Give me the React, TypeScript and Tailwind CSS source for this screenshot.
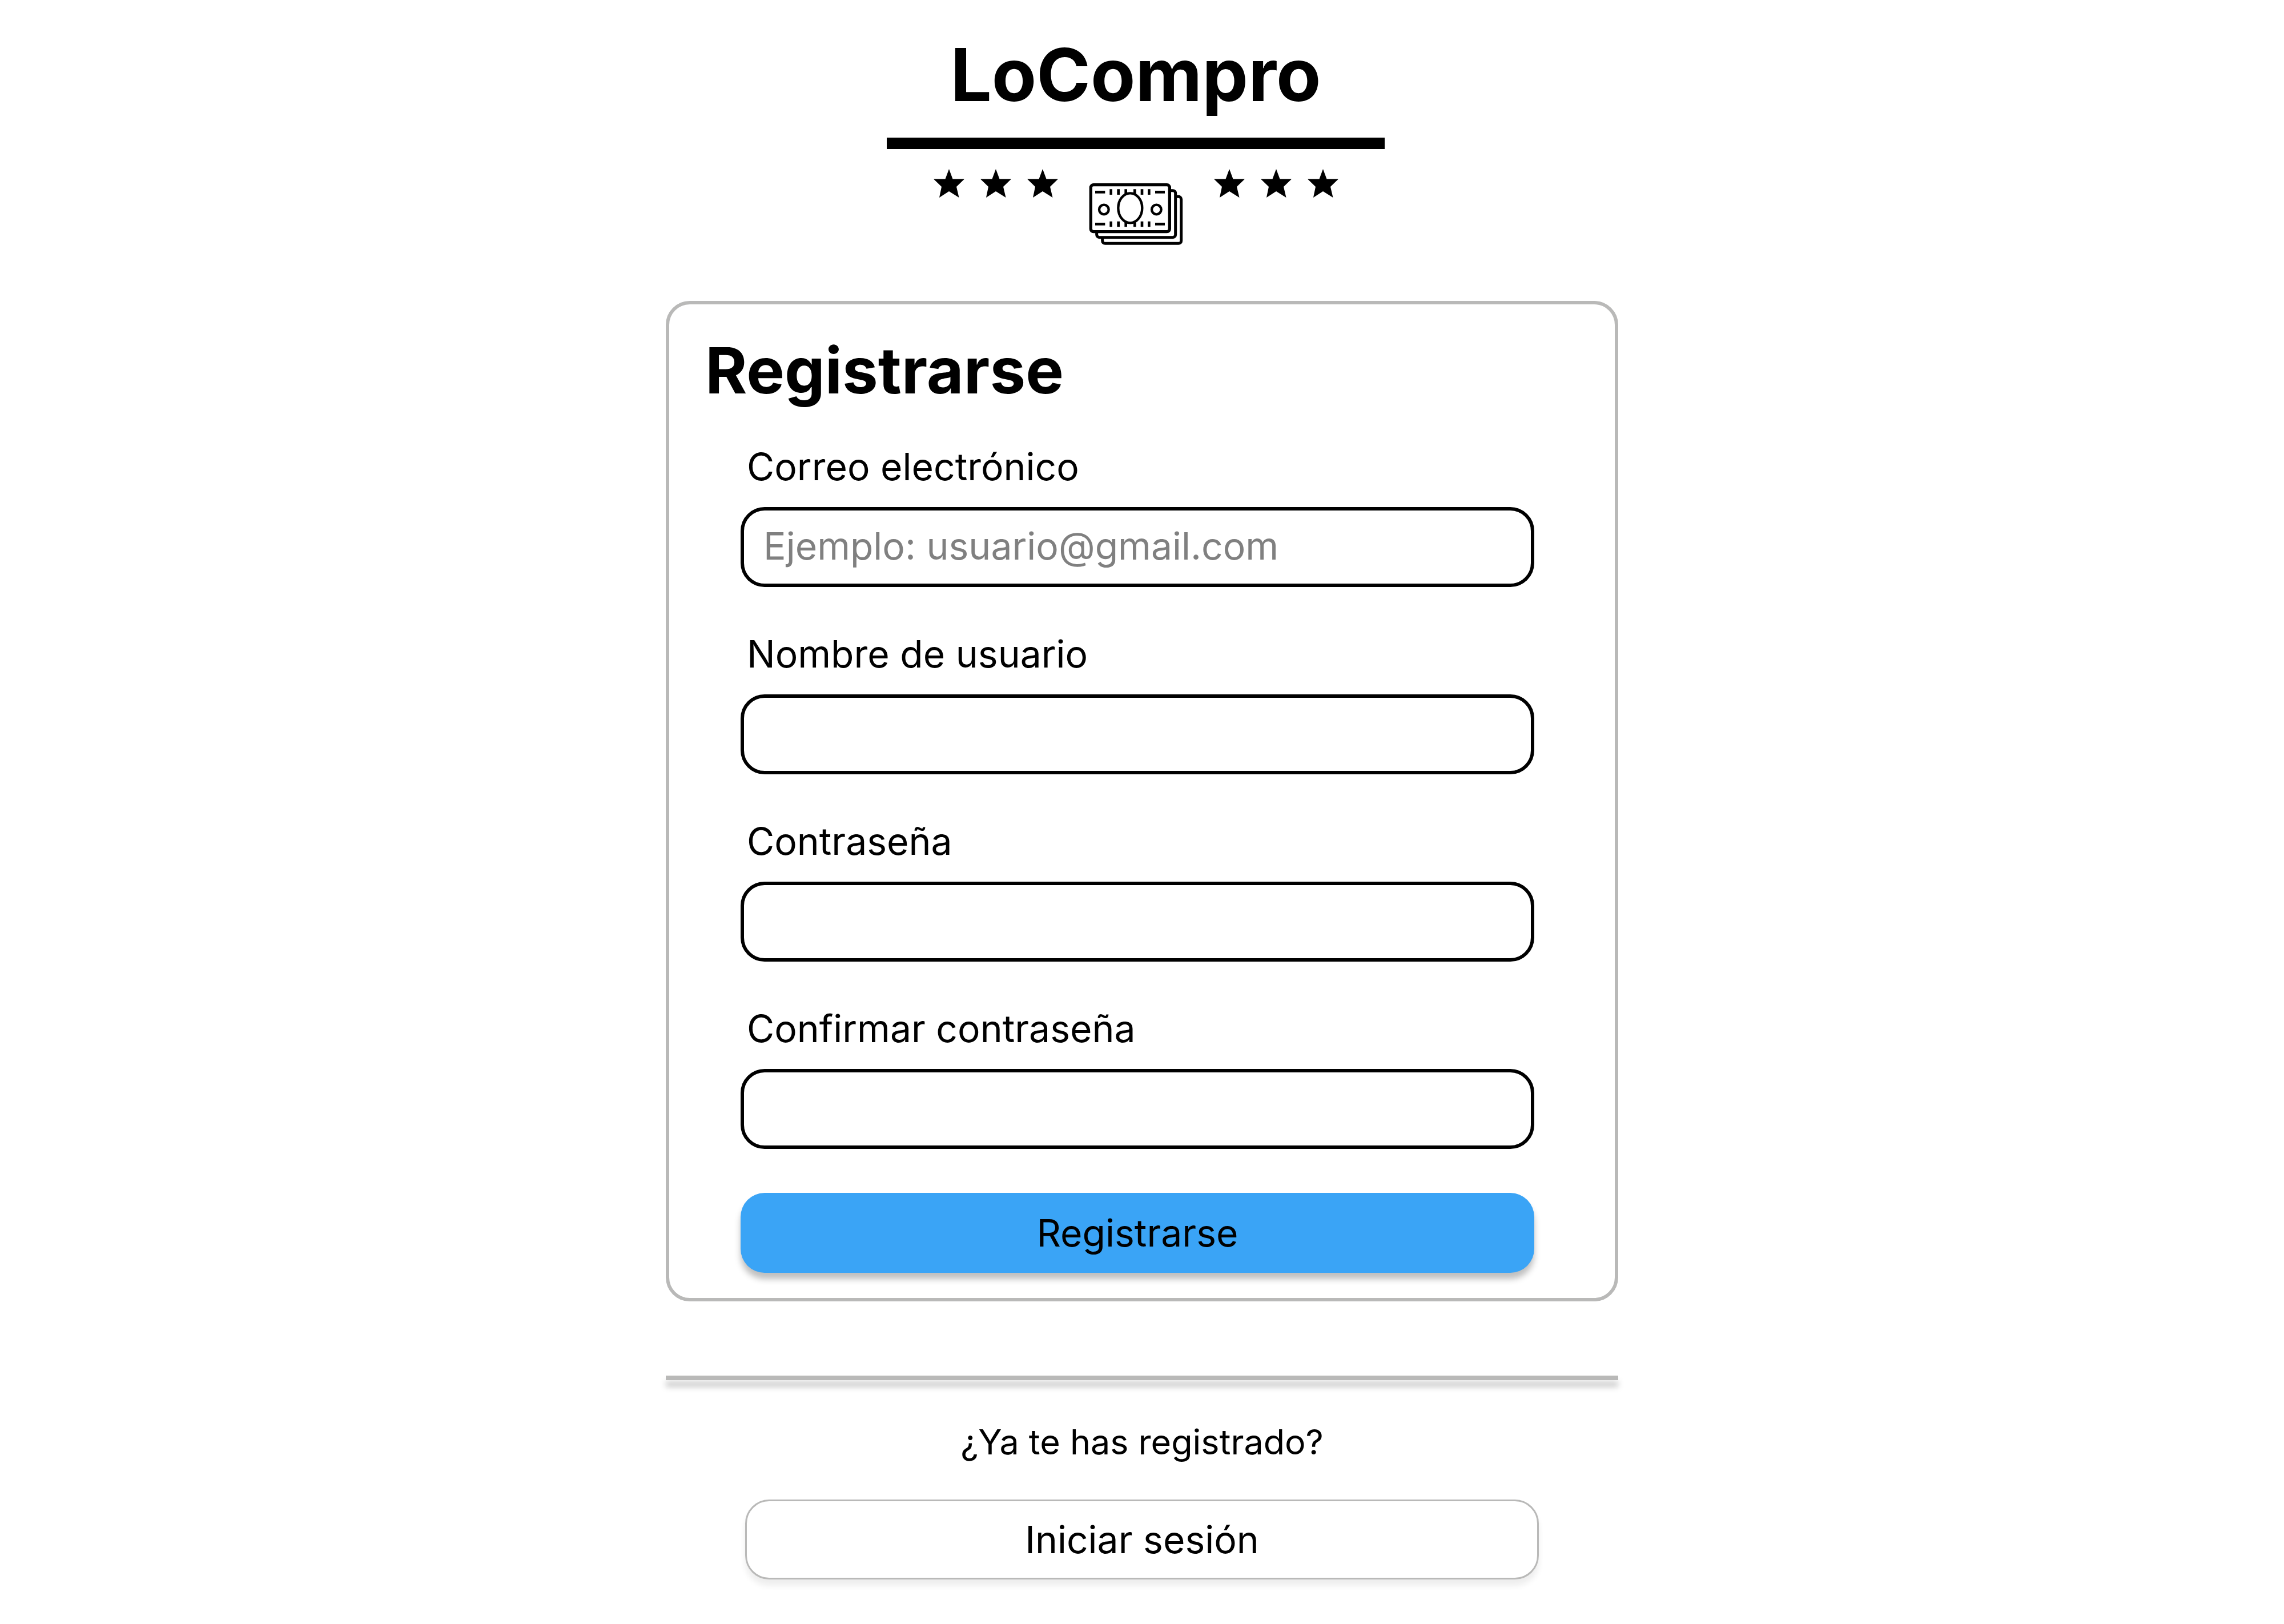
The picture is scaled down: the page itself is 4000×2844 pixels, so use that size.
import React from "react";

const fields = [
  { id: "email", label: "Correo electrónico", type: "email", placeholder: "Ejemplo: usuario@gmail.com" },
  { id: "username", label: "Nombre de usuario", type: "text" },
  { id: "password", label: "Contraseña", type: "password" },
  { id: "confirm", label: "Confirmar contraseña", type: "password" },
];

function Star() {
  return (
    <svg viewBox="0 0 54 50" className="h-[50px] w-[54px]" fill="black" aria-hidden="true">
      <path d="M27 0 33.5 17.5H54L40 31 44.5 50 27 39 10 50 14 31 0 17.5H20.5Z" />
    </svg>
  );
}

function Stars() {
  return (
    <div className="flex gap-7">
      <Star />
      <Star />
      <Star />
    </div>
  );
}

const ticks = [166, 205, 244, 291, 329, 366];

function Bills() {
  return (
    <svg viewBox="50 58 495 330" className="mt-6 h-[110px] w-[165px]" fill="none" stroke="black" aria-hidden="true">
      <rect x="121" y="131" width="414" height="246" rx="14" fill="white" strokeWidth="15" />
      <rect x="91" y="99" width="414" height="246" rx="14" fill="white" strokeWidth="15" />
      <rect x="60" y="69" width="414" height="246" rx="14" fill="white" strokeWidth="16" />
      <g strokeWidth="14">
        <path d="M83 107H135M398 107H449M83 275H135M398 275H449" />
        {ticks.map((x) => (
          <path key={x} d={`M${x} 92V121M${x} 261V290`} />
        ))}
      </g>
      <ellipse cx="267" cy="191" rx="63" ry="78" fill="white" strokeWidth="13" />
      <circle cx="129" cy="199" r="25" strokeWidth="13" />
      <circle cx="405" cy="199" r="25" strokeWidth="13" />
    </svg>
  );
}

export default function App() {
  return (
    <main className="flex min-h-screen flex-col items-center bg-white pt-[71px] pb-20 font-['Inter',sans-serif] text-[66px] leading-[80px] text-black">
      <header className="flex flex-col items-center pr-[22px]">
        <p className="text-[128px] leading-[120px] font-bold">LoCompro</p>
        <div className="mt-[50px] h-5 w-[872px] bg-black" />
        <div className="mt-[35px] flex items-start gap-[54px]">
          <Stars />
          <Bills />
          <Stars />
        </div>
      </header>

      <form
        className="mt-[97px] w-full max-w-[1668px] rounded-[42px] border-6 border-[#b9b9b8] pt-12 pb-[44px]"
        onSubmit={(e) => e.preventDefault()}
      >
        <h1 className="pl-[63px] text-[112px] leading-[134px] font-bold">Registrarse</h1>
        <div className="mt-[62px] flex flex-col gap-[77px] pr-[141px] pl-[125px]">
          {fields.map((f) => (
            <div key={f.id} className="flex flex-col gap-[31px]">
              <label htmlFor={f.id} className="pl-[11px]">
                {f.label}
              </label>
              <input
                id={f.id}
                type={f.type}
                placeholder={f.placeholder}
                className="h-[140px] w-full rounded-[42px] border-6 border-black bg-white px-[34px] pb-1 placeholder:text-[#808080]"
              />
            </div>
          ))}
          <button
            type="submit"
            className="h-[140px] w-full rounded-[42px] bg-[#3aa4f6] shadow-[0_11px_11px_rgba(0,0,0,0.25)]"
          >
            Registrarse
          </button>
        </div>
      </form>

      <hr className="mt-[130px] h-2 w-full max-w-[1668px] border-0 bg-[#b9b9b8] shadow-[0_11px_11px_rgba(0,0,0,0.25)]" />
      <p className="mt-[71px] text-[61px] leading-[74px]">¿Ya te has registrado?</p>
      <button
        type="button"
        className="mt-16 h-[140px] w-full max-w-[1390px] rounded-[42px] border-3 border-[#b9b9b8] bg-white shadow-[0_11px_11px_rgba(0,0,0,0.07)]"
      >
        Iniciar sesión
      </button>
    </main>
  );
}
